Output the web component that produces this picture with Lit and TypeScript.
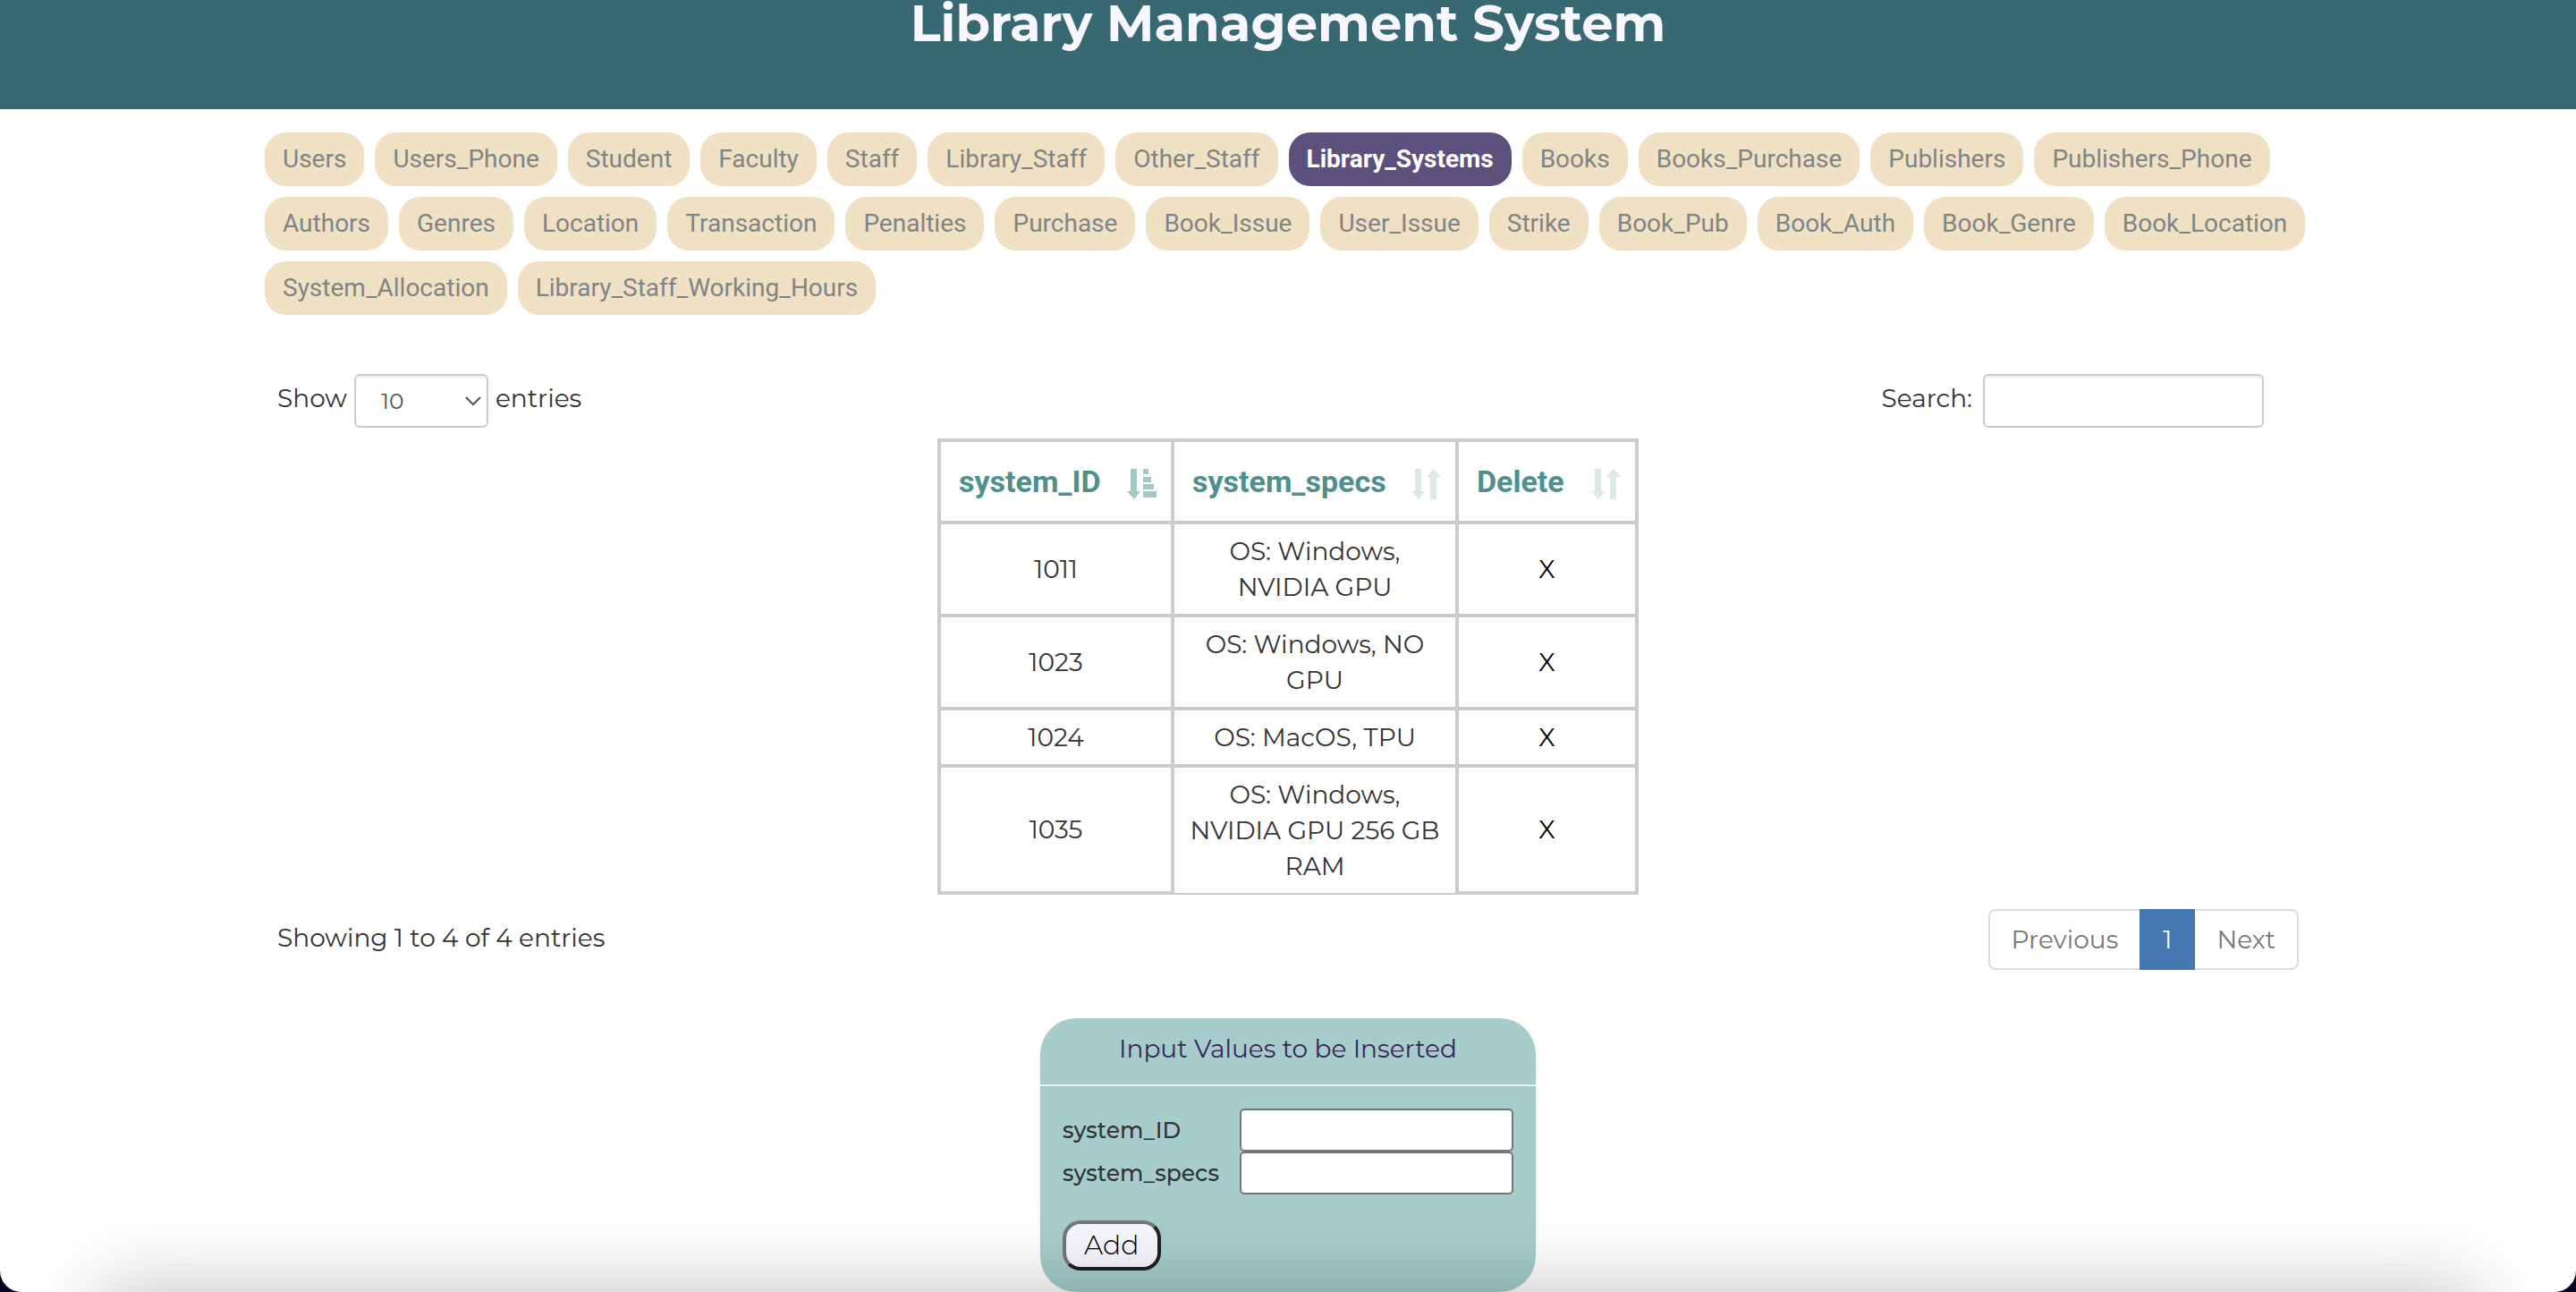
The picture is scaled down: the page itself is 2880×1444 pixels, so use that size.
import { LitElement, html, css, svg } from "lit";
import { customElement, state } from "lit/decorators.js";
import { classMap } from "lit/directives/class-map.js";

const TABS = [
  "Users", "Users_Phone", "Student", "Faculty", "Staff", "Library_Staff", "Other_Staff",
  "Library_Systems", "Books", "Books_Purchase", "Publishers", "Publishers_Phone", "Authors",
  "Genres", "Location", "Transaction", "Penalties", "Purchase", "Book_Issue", "User_Issue",
  "Strike", "Book_Pub", "Book_Auth", "Book_Genre", "Book_Location", "System_Allocation",
  "Library_Staff_Working_Hours",
];

const ROWS = [
  { id: "1011", specs: "OS: Windows,\nNVIDIA GPU" },
  { id: "1023", specs: "OS: Windows, NO\nGPU" },
  { id: "1024", specs: "OS: MacOS, TPU" },
  { id: "1035", specs: "OS: Windows,\nNVIDIA GPU 256 GB\nRAM" },
];

const FIELDS = ["system_ID", "system_specs"];

const sortedIcon = svg`<path d="M4 0h7v25h4l-7 9-8-9h4z"/><path d="M18 0h6v6h-6zM18 9h9v6h-9zM18 17h12v6h-12zM18 25h15v7h-15z"/>`;
const sortIcon = svg`<path d="M4 0h7v25h4l-7 9-8-9h4z"/><path d="M21 34h7V9h5l-8-9-8 9h4z"/>`;

@customElement("app-root")
export class AppRoot extends LitElement {
  @state() private active = "Library_Systems";

  static styles = css`
    :host {
      display: block;
      background: #0b0322;
      color: #333;
      font: 400 28px/40px Montserrat, Inter, sans-serif;
    }
    * { box-sizing: border-box; }
    input, select, button { font-family: inherit; }
    .page {
      position: relative;
      overflow: hidden;
      min-height: 100vh;
      background: #fff;
      border-radius: 0 0 24px 24px;
    }
    .banner {
      height: 122px;
      background: #386872;
      color: #f8f6fe;
      text-align: center;
    }
    .banner h1 {
      margin: 0;
      font-size: 56px;
      line-height: 52px;
      font-weight: 700;
    }
    .content { width: 80%; margin: 0 auto; }
    .tabs {
      display: flex;
      flex-wrap: wrap;
      gap: 12px;
      margin: 0;
      padding: 26px 8px 0;
      list-style: none;
    }
    .tab {
      display: block;
      padding: 10px 20px;
      border-radius: 24px;
      background: #f0e0c4;
      color: #7f8584;
      font-family: Roboto, sans-serif;
      font-weight: 400;
      text-decoration: none;
    }
    .tab.active { background: #5c507d; color: #fff; font-weight: 700; }
    .bar {
      display: flex;
      justify-content: space-between;
      align-items: flex-start;
      padding: 0 22px;
    }
    .info { padding-top: 12px; }
    .tools { margin-top: 66px; padding-right: 61px; }
    .tools label { display: flex; align-items: flex-start; gap: 8px; }
    .tools .search { gap: 12px; }
    .caption { padding-top: 7px; }
    .box {
      height: 60px;
      border: 2px solid #ccc;
      border-radius: 6px;
      background: #fff;
      box-shadow: inset 0 2px 3px rgba(0, 0, 0, 0.08);
    }
    .search .box { width: 314px; padding: 0 16px; font-size: 28px; }
    .pick { display: grid; width: 150px; align-items: center; }
    .pick > * { grid-area: 1 / 1; }
    .pick select {
      width: 100%;
      padding: 0 28px;
      appearance: none;
      color: #555;
      font-size: 25px;
    }
    .pick svg {
      justify-self: end;
      margin-right: 8px;
      width: 18px;
      height: 12px;
      fill: none;
      stroke: #555;
      stroke-width: 2;
      pointer-events: none;
    }
    table {
      margin: 12px auto 16px;
      border: 2px solid #ccc;
      border-collapse: separate;
      border-spacing: 0;
      table-layout: fixed;
      width: 784px;
    }
    .col-id { width: 261px; }
    .col-specs { width: 318px; }
    th, td { border: 2px solid #ccc; padding: 10px 0; text-align: center; }
    th {
      height: 92px;
      padding: 0 16px 0 20px;
      color: #4f8f8c;
      font: 700 34px/40px Roboto, sans-serif;
    }
    .head { display: flex; align-items: center; justify-content: space-between; }
    .head svg { width: 33px; height: 34px; margin-top: 6px; fill: #dbe9e8; }
    .head.sorted svg { fill: #a7c7c5; }
    .specs { white-space: pre-line; }
    tr:last-child .specs { border-bottom: 0; }
    .delete {
      padding: 0;
      border: 0;
      background: none;
      color: #000;
      font-size: 28px;
      line-height: 40px;
    }
    .pages {
      display: flex;
      border: 2px solid #ddd;
      border-radius: 8px;
      color: #777;
    }
    .pages a { padding: 12px 24px; color: inherit; text-decoration: none; }
    .pages .current { margin: -2px 0; padding: 14px 26px; background: #4678b2; color: #fff; }
    .insert {
      width: 554px;
      margin: 54px auto 0;
      border-radius: 40px;
      background: #a6cdcc;
    }
    .insert h2 {
      margin: 0;
      padding: 14px 0 20px;
      border-bottom: 2px solid #eee;
      color: #39275b;
      font-size: 28px;
      line-height: 40px;
      font-weight: 400;
      text-align: center;
    }
    .fields { padding: 25px 25px 24px; }
    .field { display: flex; justify-content: space-between; align-items: center; }
    .field label { font-size: 25px; font-weight: 500; }
    .field input {
      width: 306px;
      height: 48px;
      border: 2px solid #767676;
      border-radius: 5px;
      background: #fff;
      font-size: 28px;
    }
    .add {
      display: block;
      height: 56px;
      margin-top: 29px;
      padding: 0 20px;
      border: 4px solid;
      border-color: #767676 #212121 #212121 #767676;
      border-radius: 20px;
      background: #f8f6fe;
      color: #000;
      font-size: 30px;
      line-height: 46px;
      font-weight: 300;
    }
    .dock-shade {
      position: absolute;
      top: 100%;
      left: 110px;
      right: 110px;
      height: 200px;
      box-shadow: 0 0 90px rgba(0, 0, 0, 0.26);
      pointer-events: none;
    }
  `;

  private pick(event: Event, tab: string) {
    event.preventDefault();
    this.active = tab;
  }

  private heading(text: string, sorted = false) {
    return html`<th scope="col">
      <div class=${classMap({ head: true, sorted })}>
        ${text}<svg viewBox="0 0 33 34" aria-hidden="true">${sorted ? sortedIcon : sortIcon}</svg>
      </div>
    </th>`;
  }

  render() {
    return html`<div class="page">
      <header class="banner"><h1>Library Management System</h1></header>
      <main class="content">
        <nav>
          <ul class="tabs">
            ${TABS.map((tab) => html`<li>
              <a href="#" class=${classMap({ tab: true, active: tab === this.active })}
                @click=${(e: Event) => this.pick(e, tab)}>${tab}</a>
            </li>`)}
          </ul>
        </nav>
        <div class="bar tools">
          <label for="length"><span class="caption">Show</span>
            <span class="pick">
              <select id="length" class="box"><option>10</option><option>25</option><option>50</option></select>
              <svg viewBox="0 0 18 12" aria-hidden="true"><path d="M1 2l8 8 8-8"/></svg>
            </span>
            <span class="caption">entries</span></label>
          <label class="search" for="search"><span class="caption">Search:</span><input id="search" class="box" type="search"></label>
        </div>
        <table>
          <colgroup><col class="col-id"><col class="col-specs"><col></colgroup>
          <thead><tr>${this.heading("system_ID", true)}${this.heading("system_specs")}${this.heading("Delete")}</tr></thead>
          <tbody>
            ${ROWS.map((row) => html`<tr>
              <td>${row.id}</td>
              <td class="specs">${row.specs}</td>
              <td><button class="delete" type="button">X</button></td>
            </tr>`)}
          </tbody>
        </table>
        <div class="bar">
          <span class="info">Showing 1 to 4 of 4 entries</span>
          <nav class="pages"><a href="#">Previous</a><a href="#" class="current">1</a><a href="#">Next</a></nav>
        </div>
        <form class="insert">
          <h2>Input Values to be Inserted</h2>
          <div class="fields">
            ${FIELDS.map((name) => html`<div class="field">
              <label for=${name}>${name}</label><input id=${name} type="text">
            </div>`)}
            <button class="add" type="button">Add</button>
          </div>
        </form>
      </main>
      <div class="dock-shade"></div>
    </div>`;
  }
}
